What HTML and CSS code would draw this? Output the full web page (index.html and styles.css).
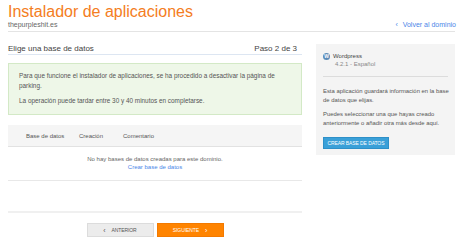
FILE: index.html
```html
<!DOCTYPE html>
<html lang="es">
<head>
<meta charset="utf-8">
<title>Instalador de aplicaciones</title>
<link rel="stylesheet" href="styles.css">
</head>
<body>
<div class="page">
  <header class="header">
    <div class="header-left">
      <h1 class="title">Instalador de aplicaciones</h1>
      <div class="domain">thepurpleshit.es</div>
    </div>
    <a class="back" href="#"><span class="chev">&lsaquo;</span> Volver al dominio</a>
  </header>

  <div class="content">
    <main class="main">
      <div class="step-row">
        <span class="step-title">Elige una base de datos</span>
        <span class="step-count">Paso 2 de 3</span>
      </div>

      <div class="notice">
        <p>Para que funcione el instalador de aplicaciones, se ha procedido a desactivar la página de parking.</p>
        <p>La operación puede tardar entre 30 y 40 minutos en completarse.</p>
      </div>

      <div class="table">
        <div class="thead">
          <span class="th th-db">Base de datos</span>
          <span class="th th-date">Creación</span>
          <span class="th th-comment">Comentario</span>
        </div>
        <div class="empty">
          <div>No hay bases de datos creadas para este dominio.</div>
          <a class="link" href="#">Crear base de datos</a>
        </div>
      </div>

      <div class="footer">
        <button class="btn btn-prev"><span class="bchev">&lsaquo;</span>ANTERIOR</button>
        <button class="btn btn-next">SIGUIENTE<span class="bchev right">&rsaquo;</span></button>
      </div>
    </main>

    <aside class="side">
      <div class="app">
        <span class="wp-icon">W</span>
        <div class="app-info">
          <div class="app-name">Wordpress</div>
          <div class="app-ver">4.2.1 - Español</div>
        </div>
      </div>
      <div class="divider"></div>
      <p class="side-text">Esta aplicación guardará información en la base de datos que elijas.</p>
      <p class="side-text">Puedes seleccionar una que hayas creado anteriormente o añadir otra más desde aquí.</p>
      <button class="btn-create">CREAR BASE DE DATOS</button>
    </aside>
  </div>
</div>
</body>
</html>
```

FILE: styles.css
```css
* { box-sizing: border-box; }
html, body { margin: 0; padding: 0; background: #fff; }
body {
  font-family: "Liberation Sans", Arial, sans-serif;
  color: #555;
}
.page {
  padding: 3px 5px 0 8px;
}
.header {
  display: flex;
  justify-content: space-between;
  align-items: flex-end;
  border-bottom: 1px solid #e4e4e4;
  padding-bottom: 2px;
}
.title {
  margin: 0;
  font-size: 16px;
  line-height: 17px;
  font-weight: normal;
  color: #f47d22;
}
.domain {
  font-size: 7px;
  line-height: 9px;
  color: #666;
}
.back {
  font-size: 7px;
  line-height: 9px;
  color: #4a86e8;
  text-decoration: none;
  margin-right: -1px;
}
.back .chev { margin-right: 3px; }

.content {
  display: flex;
  gap: 14px;
  align-items: flex-start;
  padding-top: 12px;
}
.main {
  width: 294px;
  flex: none;
}
.step-row {
  display: flex;
  justify-content: space-between;
  font-size: 8px;
  line-height: 10px;
  color: #444;
  border-bottom: 1px solid #dde6f2;
  padding-right: 5px;
}
.notice {
  margin-top: 8px;
  background: #eef7e8;
  border: 1px solid #d3e9c6;
  padding: 7px 10px 8px;
  font-size: 6.4px;
  line-height: 10px;
  color: #555;
}
.notice p { margin: 0; max-width: 258px; }
.notice p + p { margin-top: 5px; }

.table { margin-top: 10px; }
.thead {
  display: flex;
  height: 22px;
  align-items: center;
  background: #f5f5f5;
  border-bottom: 1px solid #e2e2e2;
  font-size: 6px;
  color: #555;
  padding-left: 18px;
}
.th-db { width: 53px; }
.th-date { width: 44px; }
.empty {
  text-align: center;
  font-size: 6px;
  line-height: 8px;
  color: #666;
  padding: 8px 0 9px;
  border-bottom: 1px solid #e8e8e8;
}
.link { color: #4a86e8; text-decoration: none; }

.footer {
  margin-top: 30px;
  border-top: 2px solid #f0f0f0;
  padding-top: 10px;
  display: flex;
  justify-content: center;
  gap: 3px;
}
.btn {
  width: 67px;
  height: 14px;
  font-family: "Liberation Sans", Arial, sans-serif;
  font-size: 5px;
  padding: 0;
  display: flex;
  align-items: center;
  justify-content: center;
  letter-spacing: -0.1px;
}
.btn-prev {
  background: #ececec;
  border: 1px solid #dcdcdc;
  color: #555;
}
.btn-next {
  background: #ff8400;
  border: 1px solid #f37a00;
  color: #fff;
}
.bchev { font-size: 7px; margin-right: 6px; }
.bchev.right { margin-right: 0; margin-left: 6px; }

.side {
  width: 139px;
  flex: none;
  background: #f4f4f4;
  padding: 8px 5px 6px 7px;
}
.app {
  display: flex;
  gap: 3px;
}
.wp-icon {
  width: 7px;
  height: 7px;
  margin-top: 1px;
  border-radius: 50%;
  background: #5b8bb8;
  color: #fff;
  font-size: 5px;
  line-height: 7px;
  text-align: center;
  font-weight: bold;
  flex: none;
}
.app-name {
  font-size: 6px;
  line-height: 8px;
  color: #444;
}
.app-ver {
  font-size: 6px;
  line-height: 8px;
  color: #888;
  padding-left: 2px;
}
.divider {
  margin-top: 8px;
  margin-right: 2px;
  border-top: 1px solid #dcdcdc;
}
.side-text {
  margin: 10px 0 0;
  font-size: 5.9px;
  line-height: 9px;
  color: #555;
}
.side-text + .side-text { margin-top: 5px; }
.btn-create {
  margin-top: 9px;
  width: 66px;
  height: 12px;
  background: #3aa0d8;
  border: 1px solid #2e90c8;
  color: #fff;
  font-family: "Liberation Sans", Arial, sans-serif;
  font-size: 5px;
  padding: 0;
  letter-spacing: -0.1px;
}
```
